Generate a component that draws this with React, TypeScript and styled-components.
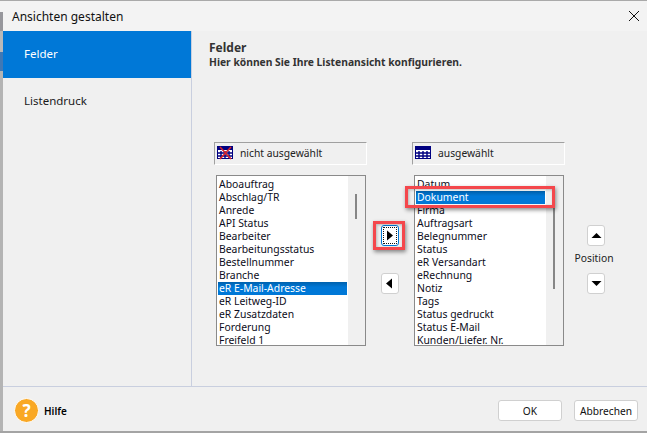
import React from "react";
import styled, { createGlobalStyle } from "styled-components";

const Global = createGlobalStyle`
  html, body { margin: 0; padding: 0; background: #f0f0f0; }
  #root { width: 647px; height: 433px; overflow: hidden; }
`;

const uiFont = `"Noto Sans", "Liberation Sans", sans-serif`;

const Frame = styled.div`
  position: relative;
  box-sizing: border-box;
  width: 647px;
  height: 433px;
  padding: 1px 0 2px 3px;
  background: linear-gradient(#a9a9a9 0 1px, #f3f3f3 1px 12px, #97979c 12px 31px, #b9b9b9 31px 52px, #3f78b5 52px 71px, #b4b4b4 71px);
  font-family: ${uiFont};
  color: #111;
  display: flex;
  flex-direction: column;
  &::before {
    content: "";
    position: absolute;
    left: 0;
    right: 0;
    top: 0;
    height: 1px;
    background: #a9a9a9;
  }
  &::after {
    content: "";
    position: absolute;
    left: 0;
    right: 0;
    bottom: 0;
    height: 2px;
    background: #a4a4a4;
  }
`;

const TitleBar = styled.div`
  height: 30px;
  flex: none;
  display: flex;
  align-items: center;
  justify-content: space-between;
  padding: 0 7px 0 9px;
  background: #f3f3f3;
  font-size: 12px;
`;

const CloseIcon = styled.svg`
  width: 12px;
  height: 12px;
  display: block;
`;

const Body = styled.div`
  flex: 1;
  min-height: 0;
  display: flex;
  background: #f0f0f0;
`;

const Sidebar = styled.nav`
  width: 188px;
  flex: none;
  border-right: 1px solid #c9cfdf;
`;

const NavItem = styled.div<{ $active?: boolean }>`
  box-sizing: border-box;
  height: 47px;
  display: flex;
  align-items: center;
  padding: 0 0 2px 21px;
  font-size: 11.5px;
  background: ${(p) => (p.$active ? "#0078d7" : "transparent")};
  color: ${(p) => (p.$active ? "#fff" : "#1a1a1a")};
`;

const Main = styled.main`
  flex: 1;
  display: flex;
  flex-direction: column;
  padding: 9px 0 0 17px;
`;

const Heading = styled.h1`
  margin: 0;
  font-size: 12px;
  line-height: 15px;
  font-weight: 700;
  color: #333;
`;

const SubHeading = styled.p`
  margin: 0;
  font-size: 10.3px;
  line-height: 14px;
  font-weight: 700;
  color: #333;
`;

const Editor = styled.div`
  margin: 73px 0 0 5px;
  display: flex;
`;

const Column = styled.div`
  width: 153px;
  flex: none;
  display: flex;
  flex-direction: column;
  align-items: flex-end;
`;

const ColumnHeader = styled.div`
  box-sizing: border-box;
  width: 153px;
  height: 23px;
  display: flex;
  align-items: center;
  gap: 7px;
  padding: 0 0 2px 2px;
  border: 1px solid;
  border-color: #a0a0a0 #fff #fff #a0a0a0;
  font-size: 10.3px;
  color: #222;
`;

const ListBox = styled.div`
  position: relative;
  box-sizing: border-box;
  width: 150px;
  height: 171px;
  margin: 10px 1px 0 0;
  padding: 2px 0 0 1px;
  background: #fff;
  border: 1px solid #8a8a8a;
  overflow: hidden;
`;

const Row = styled.div<{ $selected?: boolean }>`
  box-sizing: border-box;
  width: 129px;
  height: 13px;
  padding-left: 1px;
  font-size: 10.4px;
  line-height: 13px;
  white-space: nowrap;
  color: ${(p) => (p.$selected ? "#fff" : "#0c0c20")};
  background: ${(p) => (p.$selected ? "linear-gradient(#0061ad, #0078d7 40%)" : "transparent")};
`;

const ScrollTrack = styled.div`
  position: absolute;
  top: 0;
  right: 0;
  bottom: 0;
  width: 17px;
  background: #f0f0f0;
`;

const ScrollThumb = styled.div<{ $top: number; $height: number }>`
  position: absolute;
  left: 7px;
  width: 2px;
  top: ${(p) => p.$top}px;
  height: ${(p) => p.$height}px;
  background: #868686;
`;

const Transfer = styled.div`
  width: 45px;
  flex: none;
  display: flex;
  flex-direction: column;
  align-items: center;
  padding-top: 83px;
  gap: 27px;
`;

const IconButton = styled.button<{ $focused?: boolean }>`
  position: relative;
  box-sizing: border-box;
  width: 18px;
  height: 21px;
  padding: 0;
  display: flex;
  align-items: center;
  justify-content: center;
  background: #fff;
  border: 1px solid ${(p) => (p.$focused ? "#0078d7" : "#d0d0d0")};
  border-radius: 3px;
  outline: ${(p) => (p.$focused ? "1px dotted #111" : "none")};
  outline-offset: -3px;
`;

const Arrow = styled.svg`
  width: 11px;
  height: 11px;
  display: block;
`;

const PositionColumn = styled.div`
  width: 40px;
  flex: none;
  display: flex;
  flex-direction: column;
  align-items: center;
  padding: 83px 0 0 0;
  margin-left: 11px;
`;

const PositionLabel = styled.div`
  font-size: 10.3px;
  line-height: 14px;
  margin: 5px 4px 8px 0;
  color: #222;
`;

const Footer = styled.footer`
  box-sizing: border-box;
  height: 45px;
  flex: none;
  display: flex;
  align-items: center;
  padding: 3px 9px 0 11px;
  background: #f0f0f0;
  border-top: 1px solid #c9cfdf;
`;

const HelpBadge = styled.div`
  box-sizing: border-box;
  width: 25px;
  height: 25px;
  border-radius: 50%;
  background: #f9a825;
  border: 1px solid #fff;
  color: #fff;
  font-size: 17px;
  font-weight: 700;
  display: flex;
  align-items: center;
  justify-content: center;
`;

const HelpLabel = styled.span`
  margin-left: 5px;
  font-size: 10px;
  font-weight: 600;
  color: #000;
`;

const FooterActions = styled.div`
  margin-left: auto;
  display: flex;
  gap: 12px;
`;

const ActionButton = styled.button`
  box-sizing: border-box;
  width: 64px;
  height: 21px;
  padding: 0;
  font-family: ${uiFont};
  font-size: 10.2px;
  color: #111;
  background: #fff;
  border: 1px solid #d0d0d0;
  border-radius: 3px;
`;

const Highlight = styled.div<{ $x: number; $y: number; $w: number; $h: number }>`
  position: absolute;
  box-sizing: border-box;
  left: ${(p) => p.$x}px;
  top: ${(p) => p.$y}px;
  width: ${(p) => p.$w}px;
  height: ${(p) => p.$h}px;
  border: 3px solid #f4474c;
  box-shadow: 1px 2px 4px rgba(0, 0, 0, 0.45), inset 1px 1px 3px rgba(0, 0, 0, 0.25);
`;

const left = [
  "Aboauftrag", "Abschlag/TR", "Anrede", "API Status", "Bearbeiter", "Bearbeitungsstatus",
  "Bestellnummer", "Branche", "eR E-Mail-Adresse", "eR Leitweg-ID", "eR Zusatzdaten", "Forderung", "Freifeld 1",
];
const right = [
  "Datum", "Dokument", "Firma", "Auftragsart", "Belegnummer", "Status", "eR Versandart", "eRechnung",
  "Notiz", "Tags", "Status gedruckt", "Status E-Mail", "Kunden/Liefer. Nr.",
];

const GridIcon = ({ crossed }: { crossed?: boolean }) => (
  <svg width="16" height="15" viewBox="0 0 16 15">
    <rect x="0.5" y="1.5" width="15" height="12" fill="#fff" stroke="#000080" />
    <rect x="1" y="2" width="14" height="3" fill="#000080" />
    <path d="M4 6v7M8 6v7M12 6v7M1 8h14M1 11h14" stroke="#000080" strokeWidth="1.4" />
    {crossed && <path d="M3 2l11 12M14 2L3 14" stroke="#d8232a" strokeWidth="1.6" />}
  </svg>
);

const ArrowGlyph = ({ d }: { d: string }) => (
  <Arrow viewBox="0 0 11 11">
    <path d={d} fill="#000" />
  </Arrow>
);

export default function App() {
  return (
    <>
      <Global />
      <Frame>
        <TitleBar>
          <span>Ansichten gestalten</span>
          <CloseIcon viewBox="0 0 12 12">
            <path d="M1 1l10 10M11 1L1 11" stroke="#111" strokeWidth="1" fill="none" />
          </CloseIcon>
        </TitleBar>
        <Body>
          <Sidebar>
            <NavItem $active>Felder</NavItem>
            <NavItem>Listendruck</NavItem>
          </Sidebar>
          <Main>
            <Heading>Felder</Heading>
            <SubHeading>Hier können Sie Ihre Listenansicht konfigurieren.</SubHeading>
            <Editor>
              <Column>
                <ColumnHeader>
                  <GridIcon crossed />
                  nicht ausgewählt
                </ColumnHeader>
                <ListBox>
                  {left.map((t) => (
                    <Row key={t} $selected={t === "eR E-Mail-Adresse"}>{t}</Row>
                  ))}
                  <ScrollTrack>
                    <ScrollThumb $top={18} $height={25} />
                  </ScrollTrack>
                </ListBox>
              </Column>
              <Transfer>
                <IconButton $focused>
                  <ArrowGlyph d="M3 0.5l6 5-6 5z" />
                </IconButton>
                <IconButton>
                  <ArrowGlyph d="M8 0.5l-6 5 6 5z" />
                </IconButton>
              </Transfer>
              <Column>
                <ColumnHeader>
                  <GridIcon />
                  ausgewählt
                </ColumnHeader>
                <ListBox>
                  {right.map((t) => (
                    <Row key={t} $selected={t === "Dokument"}>{t}</Row>
                  ))}
                  <ScrollTrack>
                    <ScrollThumb $top={17} $height={96} />
                  </ScrollTrack>
                </ListBox>
              </Column>
              <PositionColumn>
                <IconButton>
                  <ArrowGlyph d="M0.5 8l5-5 5 5z" />
                </IconButton>
                <PositionLabel>Position</PositionLabel>
                <IconButton>
                  <ArrowGlyph d="M0.5 3l5 5 5-5z" />
                </IconButton>
              </PositionColumn>
            </Editor>
          </Main>
        </Body>
        <Footer>
          <HelpBadge>?</HelpBadge>
          <HelpLabel>Hilfe</HelpLabel>
          <FooterActions>
            <ActionButton>OK</ActionButton>
            <ActionButton>Abbrechen</ActionButton>
          </FooterActions>
        </Footer>
        <Highlight $x={405} $y={186} $w={150} $h={22} />
        <Highlight $x={373} $y={221} $w={32} $h={29} />
      </Frame>
    </>
  );
}
